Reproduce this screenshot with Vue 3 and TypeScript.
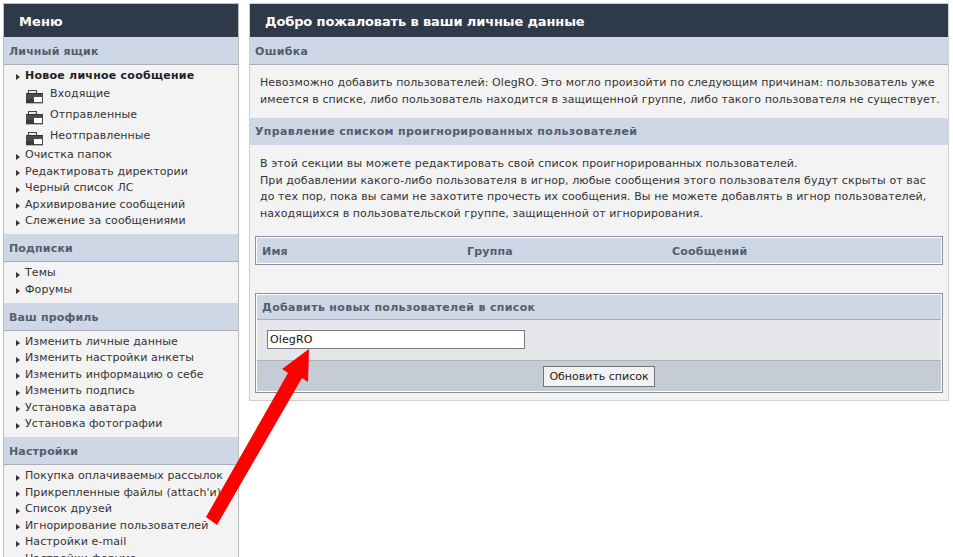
<script setup lang="ts">
interface Item { label: string; bold?: boolean; folder?: boolean }
interface Section { title: string; items: Item[] }
const sections: Section[] = [
  { title: 'Личный ящик', items: [
    { label: 'Новое личное сообщение', bold: true },
    { label: 'Входящие', folder: true },
    { label: 'Отправленные', folder: true },
    { label: 'Неотправленные', folder: true },
    { label: 'Очистка папок' },
    { label: 'Редактировать директории' },
    { label: 'Черный список ЛС' },
    { label: 'Архивирование сообщений' },
    { label: 'Слежение за сообщениями' },
  ] },
  { title: 'Подписки', items: [{ label: 'Темы' }, { label: 'Форумы' }] },
  { title: 'Ваш профиль', items: [
    { label: 'Изменить личные данные' },
    { label: 'Изменить настройки анкеты' },
    { label: 'Изменить информацию о себе' },
    { label: 'Изменить подпись' },
    { label: 'Установка аватара' },
    { label: 'Установка фотографии' },
  ] },
  { title: 'Настройки', items: [
    { label: 'Покупка оплачиваемых рассылок' },
    { label: "Прикрепленные файлы (attach'и)" },
    { label: 'Список друзей' },
    { label: 'Игнорирование пользователей' },
    { label: 'Настройки e-mail' },
    { label: 'Настройки форума' },
  ] },
]
</script>

<template>
  <div class="page">
    <aside class="menu">
      <h2 class="title">Меню</h2>
      <section v-for="s in sections" :key="s.title">
        <h3 class="head menu-head">{{ s.title }}</h3>
        <ul class="list">
          <li v-for="i in s.items" :key="i.label" :class="{ bold: i.bold, folder: i.folder }">
            <svg v-if="i.folder" class="folder-icon" width="18" height="14" viewBox="0 0 18 14">
              <rect x="2.5" y="0.5" width="8" height="3" fill="#e8e8e8" stroke="#444" />
              <rect x="0" y="3" width="17" height="10" fill="#4c4c4c" />
              <rect x="0" y="3" width="17" height="1" fill="#333" />
              <rect x="0" y="9" width="8" height="4" fill="#3a3a3a" />
              <rect x="8" y="7" width="8" height="5" fill="#fff" />
              <rect x="0" y="13" width="17" height="1" fill="#b5b5b5" />
            </svg>
            <svg v-else class="bullet" width="4" height="6" viewBox="0 0 4 6"><path d="M0 0l4 3-4 3z" fill="#333" /></svg>
            <span>{{ i.label }}</span>
          </li>
        </ul>
      </section>
    </aside>

    <main class="content">
      <h2 class="title main-title">Добро пожаловать в ваши личные данные</h2>
      <h3 class="head">Ошибка</h3>
      <p class="text error">Невозможно добавить пользователей: OlegRO. Это могло произойти по следующим причинам: пользователь уже имеется в списке, либо пользователь находится в защищенной группе, либо такого пользователя не существует.</p>
      <h3 class="head plain">Управление списком проигнорированных пользователей</h3>
      <p class="text intro">В этой секции вы можете редактировать свой список проигнорированных пользователей.<br />При добавлении какого-либо пользователя в игнор, любые сообщения этого пользователя будут скрыты от вас до тех пор, пока вы сами не захотите прочесть их сообщения. Вы не можете добавлять в игнор пользователей, находящихся в пользовательской группе, защищенной от игнорирования.</p>
      <div class="box table-box">
        <div class="cols">
          <span>Имя</span><span>Группа</span><span>Сообщений</span>
        </div>
      </div>
      <form class="box add-box" @submit.prevent>
        <h3 class="head">Добавить новых пользователей в список</h3>
        <div class="field"><input class="input" type="text" value="OlegRO" /></div>
        <div class="actions"><button class="btn" type="submit">Обновить список</button></div>
      </form>
    </main>

    <svg class="arrow" width="110" height="180" viewBox="0 0 110 180">
      <polygon points="104,1 103,34 97,30 12,177 1,169 83,25 77,21" fill="#fe0000" />
    </svg>
  </div>
</template>

<style>
html, body { margin: 0; background: #fff; }
</style>

<style scoped>
.page {
  position: relative;
  width: 953px;
  height: 557px;
  overflow: hidden;
  display: flex;
  align-items: flex-start;
  gap: 10px;
  padding: 3px 0 0 3px;
  box-sizing: border-box;
  font-family: "DejaVu Sans", Verdana, sans-serif;
  font-size: 11px;
  letter-spacing: .09px;
  color: #333;
}
.menu {
  flex: none;
  width: 236px;
  box-sizing: border-box;
  border: 1px solid #bcbcbc;
  border-bottom: 0;
  background: #f3f3f3;
  min-height: 600px;
}
.content {
  flex: none;
  width: 700px;
  box-sizing: border-box;
  border: 1px solid #cfcfcf;
  background: #f3f3f3;
  padding-bottom: 2px;
}
.title {
  margin: 0;
  height: 33px;
  line-height: 35px;
  padding-left: 15px;
  background: #2e3a4a;
  color: #fff;
  font-size: 13px;
  font-weight: bold;
}
.main-title { letter-spacing: -.13px; }
.head {
  margin: 0;
  height: 26px;
  padding: 1px 0 0 5px;
  line-height: 27px;
  background: #cdd7e5;
  border-bottom: 1px solid #a9aeb6;
  color: #545d6b;
  font-size: 11px;
  font-weight: bold;
  letter-spacing: .34px;
}
.menu-head { letter-spacing: .15px; }
.list {
  list-style: none;
  margin: 0;
  padding: 3px 0 4.55px 12px;
}
.list li {
  display: flex;
  align-items: center;
  height: 16.5px;
  line-height: 16.5px;
  white-space: nowrap;
}
.list li.bold { font-weight: bold; color: #222; height: 16px; letter-spacing: .25px; }
.list li.folder { height: 21.1px; padding-left: 10px; }
.bullet { margin-right: 5px; margin-top: 2px; flex: none; }
.folder-icon { margin: 4px 6px 0 0; flex: none; }
.text { margin: 0; line-height: 16.5px; color: #333; }
.error { padding: 10px 5px 10px 10px; height: 33px; }
.plain { border-bottom: 0; height: 27px; padding-top: 0; }
.intro { padding: 11px 8px 0 10px; height: 80px; }
.box {
  margin: 0 5px;
  border: 1px solid #8d9196;
  padding: 1px;
  background: #fff;
}
.cols {
  display: grid;
  grid-template-columns: 205px 205px 1fr;
  height: 25px;
  line-height: 27px;
  padding-left: 5px;
  background: #cdd7e5;
  font-weight: bold;
  letter-spacing: .2px;
  color: #545d6b;
}
.add-box { margin-top: 28px; margin-bottom: 5px; }
.add-box .head { height: 23px; line-height: 23px; }
.field {
  background: #e4e6ea;
  height: 40px;
  padding: 10px 0 0 10px;
  box-sizing: border-box;
}
.input {
  display: block;
  width: 258px;
  height: 19px;
  box-sizing: border-box;
  border: 1px solid #777b80;
  padding: 0 2px;
  background: #fff;
  font: 11px "DejaVu Sans", Verdana, sans-serif;
  letter-spacing: .12px;
  color: #111;
}
.actions {
  background: #c5ccd5;
  border-top: 1px solid #aeb3ba;
  height: 31px;
  box-sizing: border-box;
  display: flex;
  justify-content: center;
  align-items: center;
}
.btn {
  height: 21px;
  padding: 0 5px;
  border: 1px solid #70757c;
  background: #f2f2f2;
  font: 11px "DejaVu Sans", Verdana, sans-serif;
  color: #222;
}
.arrow {
  position: absolute;
  left: 205px;
  top: 348px;
}
</style>
